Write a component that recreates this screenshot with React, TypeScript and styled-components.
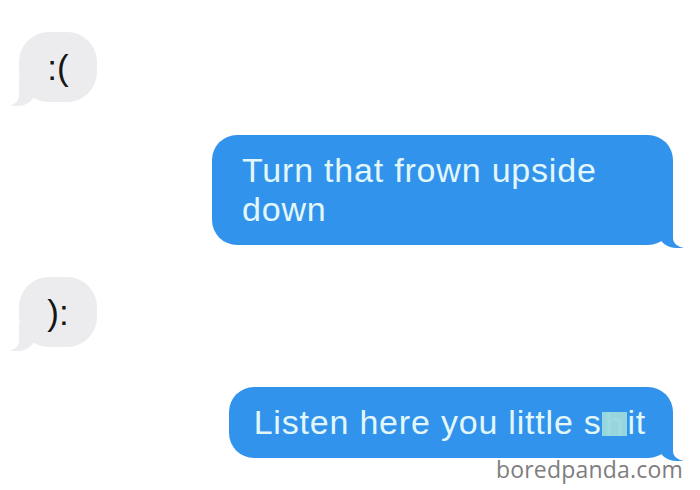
import React from "react";
import styled, { createGlobalStyle, css } from "styled-components";

const GlobalStyle = createGlobalStyle`
  html, body {
    margin: 0;
    padding: 0;
    background: #ffffff;
    overflow: hidden;
  }
  body {
    font-family: "Liberation Sans", Arial, sans-serif;
  }
`;

const BLUE = "#3193ec";
const GRAY = "#ececee";

const Thread = styled.main`
  width: 700px;
  height: 490px;
  box-sizing: border-box;
  padding-top: 32px;
  display: flex;
  flex-direction: column;
  background: #ffffff;
  overflow: hidden;
`;

const Row = styled.div<{ $side: "in" | "out"; $gap?: number }>`
  display: flex;
  justify-content: ${(p) => (p.$side === "in" ? "flex-start" : "flex-end")};
  padding: ${(p) => (p.$side === "in" ? "0 0 0 19px" : "0 27px 0 0")};
  margin-top: ${(p) => p.$gap ?? 0}px;
`;

const tailIn = css`
  &::before {
    content: "";
    position: absolute;
    left: -8px;
    bottom: -4px;
    width: 24px;
    height: 28px;
    background: ${GRAY};
    border-bottom-right-radius: 18px 14px;
  }
  &::after {
    content: "";
    position: absolute;
    left: -24px;
    bottom: -4px;
    width: 24px;
    height: 28px;
    background: #ffffff;
    border-bottom-right-radius: 12px 10px;
  }
`;

const tailOut = css`
  &::before {
    content: "";
    position: absolute;
    right: -10px;
    bottom: -3px;
    width: 24px;
    height: 28px;
    background: ${BLUE};
    border-bottom-left-radius: 18px 14px;
  }
  &::after {
    content: "";
    position: absolute;
    right: -24px;
    bottom: -3px;
    width: 24px;
    height: 28px;
    background: #ffffff;
    border-bottom-left-radius: 12px 10px;
  }
`;

const Incoming = styled.div`
  position: relative;
  width: 78px;
  height: 70px;
  border-radius: 30px;
  background: ${GRAY};
  color: #161616;
  display: flex;
  align-items: center;
  justify-content: center;
  font-size: 35px;
  line-height: 1;
  ${tailIn}
`;

const Outgoing = styled.div<{ $indent: number }>`
  position: relative;
  box-sizing: border-box;
  max-width: 461px;
  padding: 16px 27px 16px ${(p) => p.$indent}px;
  border-radius: 25px;
  background: ${BLUE};
  color: #e2f7f9;
  font-size: 34px;
  line-height: 39px;
  letter-spacing: 0.8px;
  ${tailOut}
`;

const Censor = styled.span`
  display: inline-block;
  padding: 0 3px;
  height: 24px;
  line-height: 24px;
  vertical-align: -2px;
  background: #95d7dd;
  color: #9fdbe0;
`;

const Watermark = styled.div`
  align-self: flex-end;
  margin-right: 17px;
  font-family: "Open Sans", "DejaVu Sans", sans-serif;
  font-size: 23px;
  line-height: 23px;
  color: #7e7e7e;
  letter-spacing: 0.2px;
`;

export default function App() {
  return (
    <>
      <GlobalStyle />
      <Thread>
        <Row $side="in">
          <Incoming>:(</Incoming>
        </Row>
        <Row $side="out" $gap={33}>
          <Outgoing $indent={30}>Turn that frown upside down</Outgoing>
        </Row>
        <Row $side="in" $gap={32}>
          <Incoming>):</Incoming>
        </Row>
        <Row $side="out" $gap={40}>
          <Outgoing $indent={25}>
            Listen here you little s<Censor>h</Censor>it
          </Outgoing>
        </Row>
        <Watermark>boredpanda.com</Watermark>
      </Thread>
    </>
  );
}
